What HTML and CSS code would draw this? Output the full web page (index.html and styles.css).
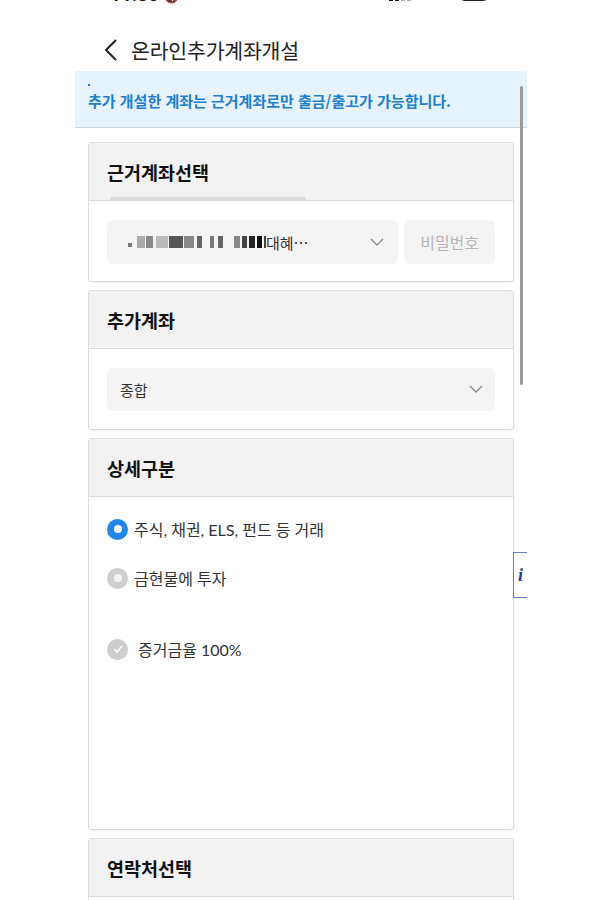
FILE: index.html
```html
<!DOCTYPE html>
<html lang="ko">
<head>
<meta charset="utf-8">
<title>온라인추가계좌개설</title>
<link rel="stylesheet" href="styles.css">
</head>
<body>
<div class="statusbar">
  <div class="status-inner">
    <span class="time">11:30 <span class="mute">🔇</span></span>
    <span class="sys">
      <span class="sig"><i></i><i></i><i></i><i></i></span>
      <span class="wifi"></span>
      <span class="batt">69</span>
    </span>
  </div>
</div>
<div class="app">
  <header class="topbar">
    <svg class="back" width="16" height="22" viewBox="0 0 16 22"><path d="M13 1 L3 11 L13 21" fill="none" stroke="#222" stroke-width="2"/></svg>
    <h1 class="title">온라인추가계좌개설</h1>
  </header>
  <div class="notice">
    <span class="dot"></span>
    <p class="notice-text">추가 개설한 계좌는 근거계좌로만 출금/출고가 가능합니다.</p>
  </div>
  <main class="cards">
    <section class="card c1">
      <div class="card-head">
        <h2>근거계좌선택</h2>
        <span class="tabline"></span>
      </div>
      <div class="card-body row">
        <div class="select acct">
          <span class="mask">
            <b class="m1"></b><b class="m2"></b><b class="m3"></b><b class="m4"></b><b class="m5"></b><b class="m6"></b><b class="m7"></b><b class="m8"></b><b class="m9"></b><b class="m10"></b><b class="m11"></b><b class="m12"></b><b class="m13"></b><b class="m14"></b>
          </span><span class="acct-name">대혜…</span>
          <svg class="chev" width="14" height="8" viewBox="0 0 14 8"><path d="M1 1 L7 7 L13 1" fill="none" stroke="#888" stroke-width="1.3"/></svg>
        </div>
        <div class="pw">비밀번호</div>
      </div>
    </section>
    <section class="card c2">
      <div class="card-head"><h2>추가계좌</h2></div>
      <div class="card-body">
        <div class="select full">
          <span class="sel-text">종합</span>
          <svg class="chev" width="14" height="8" viewBox="0 0 14 8"><path d="M1 1 L7 7 L13 1" fill="none" stroke="#888" stroke-width="1.3"/></svg>
        </div>
      </div>
    </section>
    <section class="card detail">
      <div class="card-head"><h2>상세구분</h2></div>
      <div class="card-body options">
        <label class="opt"><span class="radio on"></span>주식, 채권, ELS, 펀드 등 거래</label>
        <label class="opt"><span class="radio"></span>금현물에 투자</label>
        <label class="opt check-opt"><span class="check"><svg width="12" height="10" viewBox="0 0 12 10"><path d="M2 5 L5 8 L10 2" fill="none" stroke="#fff" stroke-width="1.6"/></svg></span>증거금율 100%</label>
      </div>
    </section>
    <section class="card">
      <div class="card-head"><h2>연락처선택</h2></div>
      <div class="card-body"></div>
    </section>
  </main>
  <div class="scrollbar"></div>
  <div class="info-tab">i</div>
</div>
</body>
</html>
```
FILE: styles.css
```css
* { box-sizing: border-box; }
html, body { margin: 0; padding: 0; background: #fff; }
body {
  width: 599px;
  height: 900px;
  overflow: hidden;
  font-family: "Noto Sans CJK KR", "Noto Sans", sans-serif;
  color: #222;
}
.statusbar {
  height: 5px;
  overflow: hidden;
  display: flex;
  align-items: flex-end;
}
.status-inner {
  flex: 0 0 auto;
  width: 599px;
  height: 22px;
  display: flex;
  justify-content: space-between;
  align-items: center;
  padding: 0 110px 0 110px;
}
.time { font-family: Roboto, sans-serif; font-weight: 700; font-size: 19px; color: #111; }
.mute { font-size: 12px; }
.sys { display: flex; align-items: center; gap: 10px; }
.sig { display: flex; gap: 2px; align-items: flex-end; }
.sig i { display: block; width: 4px; height: 14px; background: #111; }
.sig i:nth-child(3), .sig i:nth-child(4) { background: #aaa; }
.wifi { width: 8px; height: 8px; background: #111; border-radius: 50%; margin: 0 10px; }
.batt { width: 30px; height: 14px; border-radius: 6px; background: #222; color: #fff; font-size: 9px; text-align: center; }

.app {
  position: relative;
  width: 452px;
  margin-left: 75px;
}
.topbar {
  height: 66px;
  display: flex;
  align-items: center;
  padding-left: 28px;
  gap: 12px;
  padding-top: 24px;
  padding-bottom: 0;
}
.back { display: block; flex: none; }
.title {
  margin: 0;
  font-size: 20.5px;
  font-weight: 400;
  color: #222;
  letter-spacing: -0.2px;
}
.notice {
  height: 57px;
  background: #e6f3fc;
  border-bottom: 1px solid #cfd6dc;
  padding: 13px 13px 0;
}
.dot { display: block; width: 2px; height: 2px; background: #1e7fcf; margin-bottom: 5px; }
.notice-text {
  margin: 0;
  font-size: 15px;
  font-weight: 700;
  color: #1e7fcf;
  line-height: 20px;
}
.cards {
  padding: 14px 13px 0;
  display: flex;
  flex-direction: column;
  gap: 8px;
}
.card {
  border: 1px solid #dcdcdc;
  border-radius: 3px;
  background: #fff;
  box-shadow: 0 1px 2px rgba(0,0,0,0.06);
}
.card-head {
  position: relative;
  height: 58px;
  background: #f2f2f2;
  border-bottom: 1px solid #d8d8d8;
  display: flex;
  align-items: center;
  padding-left: 18px;
}
.card-head h2 {
  margin: 0;
  font-size: 18.5px;
  font-weight: 700;
  color: #111;
}
.tabline {
  position: absolute;
  left: 21px;
  bottom: 0;
  width: 196px;
  height: 3px;
  background: #dadada;
}
.card-body {
  padding: 19px 18px 17px;
}
.c2 .card-body { padding-bottom: 18px; }
.row { display: flex; gap: 6px; }
.select {
  height: 44px;
  border-radius: 6px;
  background: #f4f4f4;
  display: flex;
  align-items: center;
  position: relative;
}
.acct { width: 292px; padding-left: 21px; }
.mask { display: flex; align-items: center; height: 16px; }
.mask b { display: block; height: 12px; }
.m1 { width: 4px; height: 4px !important; background: #777; margin-right: 5px; margin-top: 6px; }
.m2 { width: 8px; background: #aaa; margin-right: 1px; }
.m3 { width: 7px; background: #888; margin-right: 3px; }
.m4 { width: 12px; background: #bbb; margin-right: 1px; }
.m5 { width: 14px; background: #555; margin-right: 1px; }
.m6 { width: 10px; background: #888; margin-right: 3px; }
.m7 { width: 5px; background: #666; margin-right: 8px; }
.m8 { width: 4px; background: #777; margin-right: 4px; }
.m9 { width: 5px; background: #666; margin-right: 11px; }
.m10 { width: 6px; background: #888; margin-right: 2px; }
.m11 { width: 5px; background: #444; margin-right: 2px; }
.m12 { width: 6px; background: #222; margin-right: 2px; }
.m13 { width: 5px; background: #111; margin-right: 2px; }
.m14 { width: 2px; background: #444; }
.acct-name { font-size: 15px; color: #333; }
.chev { position: absolute; right: 14px; top: 18px; }
.pw {
  width: 91px;
  height: 44px;
  border-radius: 6px;
  background: #f4f4f4;
  display: flex;
  align-items: center;
  justify-content: center;
  font-size: 16px;
  color: #b5b5b5;
}
.full { width: 100%; padding-left: 13px; height: 43px; }
.full .chev { right: 12px; top: 17px; }
.sel-text { font-size: 15px; color: #333; }
.detail { height: 392px; }
.options {
  padding: 20px 18px 0;
  display: flex;
  flex-direction: column;
  font-family: Lato, "Noto Sans CJK KR", sans-serif;
}
.opt {
  display: flex;
  align-items: center;
  gap: 6px;
  font-size: 16px;
  color: #333;
  height: 24px;
}
.opt + .opt { margin-top: 25px; }
.check-opt { margin-top: 47px !important; gap: 10px; }
.radio {
  width: 21px; height: 21px; border-radius: 50%;
  background: #cfcfcf;
  display: flex; align-items: center; justify-content: center;
  flex: none;
}
.radio::after {
  content: "";
  width: 8px; height: 8px; border-radius: 50%;
  background: #f4f4f4;
}
.radio.on { background: #2186e9; }
.radio.on::after { background: #fff; }
.check {
  width: 21px; height: 21px; border-radius: 50%;
  background: #cdcdcd;
  display: flex; align-items: center; justify-content: center;
  flex: none;
}
.check svg { display: block; }
.scrollbar {
  position: absolute;
  left: 445px;
  top: 81px;
  width: 3px;
  height: 299px;
  border-radius: 2px;
  background: #9a9a9a;
}
.info-tab {
  position: absolute;
  left: 438px;
  top: 547px;
  width: 14px;
  height: 46px;
  border: 1px solid #6a7bd0;
  border-right: none;
  background: #fff;
  display: flex;
  align-items: center;
  justify-content: center;
  font-family: "Liberation Serif", serif;
  font-style: italic;
  font-weight: 700;
  font-size: 18px;
  color: #233a9e;
}
```
